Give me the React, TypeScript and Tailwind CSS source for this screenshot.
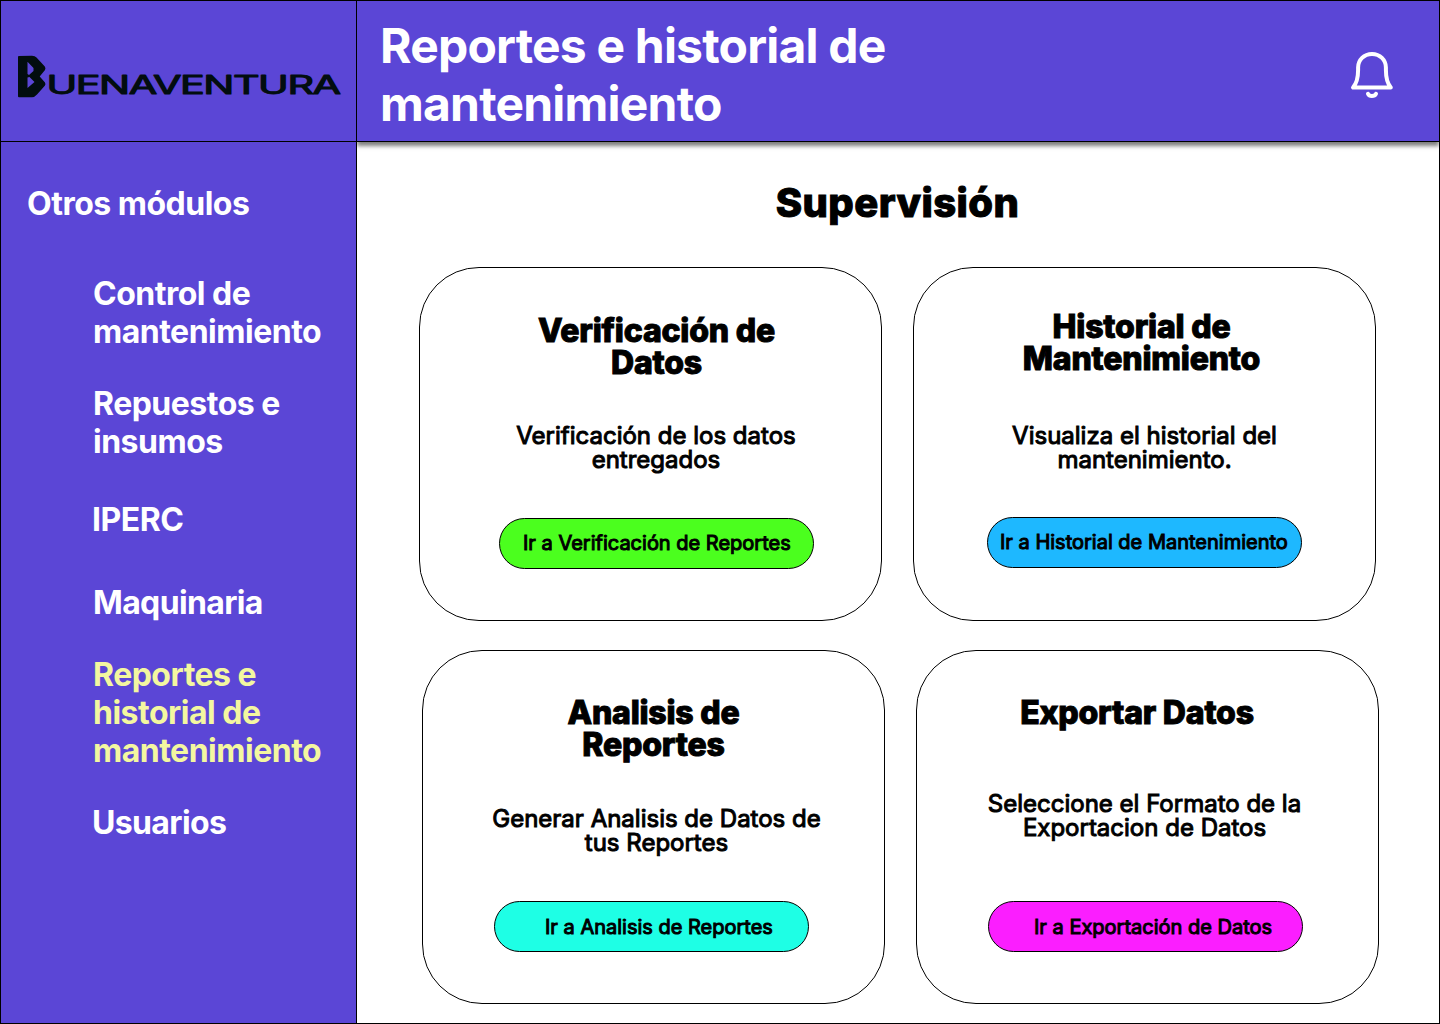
type CardData = {
  title: string[];
  text: string[];
  action: string;
  titleClass: string;
  textClass: string;
  buttonClass: string;
};

const rows: { className: string; cards: CardData[] }[] = [
  {
    className: "mt-[42px] ml-[62px]",
    cards: [
      {
        title: ["Verificación de", "Datos"],
        text: ["Verificación de los datos", "entregados"],
        action: "Ir a Verificación de Reportes",
        titleClass: "mt-[47px] pl-[12px] h-[109px]",
        textClass: "pl-[11px] h-[94px]",
        buttonClass: "ml-[79px] pl-[23px] pb-[1px] bg-[#4bff1e]",
      },
      {
        title: ["Historial de", "Mantenimiento"],
        text: ["Visualiza el historial del", "mantenimiento."],
        action: "Ir a Historial de Mantenimiento",
        titleClass: "mt-[43px] pr-[6px] h-[113px]",
        textClass: "h-[93px]",
        buttonClass: "ml-[73px] pl-[12px] pb-[1px] bg-[#1eb8ff]",
      },
    ],
  },
  {
    className: "mt-[29px] ml-[65px]",
    cards: [
      {
        title: ["Analisis de", "Reportes"],
        text: ["Generar Analisis de Datos de", "tus Reportes"],
        action: "Ir a Analisis de Reportes",
        titleClass: "mt-[46px] h-[110px]",
        textClass: "pl-[6px] h-[94px]",
        buttonClass: "ml-[71px] pl-[50px] bg-[#1effe5]",
      },
      {
        title: ["Exportar Datos"],
        text: ["Seleccione el Formato de la", "Exportacion de Datos"],
        action: "Ir a Exportación de Datos",
        titleClass: "mt-[46px] pr-[21px] h-[95px]",
        textClass: "pr-[6px] h-[109px]",
        buttonClass: "ml-[71px] pl-[45px] bg-[#fb1eff]",
      },
    ],
  },
];

const modules = [
  { lines: ["Control de", "mantenimiento"], className: "mt-[52px]" },
  { lines: ["Repuestos e", "insumos"], className: "mt-[34px]" },
  { lines: ["IPERC"], className: "mt-[40px] -ml-px" },
  { lines: ["Maquinaria"], className: "mt-[45px] tracking-[-0.02em]" },
  {
    lines: ["Reportes e", "historial de", "mantenimiento"],
    className: "mt-[34px] text-[#f3f7a0]",
  },
  { lines: ["Usuarios"], className: "mt-[34px] -ml-px tracking-[-0.02em]" },
];

function Lines({ lines }: { lines: string[] }) {
  return (
    <>
      {lines.map((line) => (
        <span key={line} className="block whitespace-nowrap">
          {line}
        </span>
      ))}
    </>
  );
}

function Logo() {
  return (
    <svg width="328" height="48" viewBox="0 0 328 48" className="mt-[50px] ml-[14px] block" fill="#020d0f">
      <path
        fillRule="evenodd"
        d="M3 5.8Q3 5 4 5L17 4.7Q20 5 21.5 6.4L29.8 15.5Q31 17.3 30 19L24.7 25.5L30 31.5Q31 33.2 29.8 34.8L22 43.5Q19.5 46.3 17 46.3H4Q3 46.3 3 45.3ZM12.5 10.7V23L14 24L18.5 20V17ZM12.5 26.5V37L19.5 31L14.5 26Z"
      />
      <text
        x="31.5"
        y="42.6"
        fontFamily="Inter, sans-serif"
        fontSize="25"
        fontWeight="400"
        letterSpacing="-0.9"
        stroke="#020d0f"
        strokeWidth="1"
        strokeLinejoin="round"
        textLength="293"
        lengthAdjust="spacingAndGlyphs"
      >
        UENAVENTURA
      </text>
    </svg>
  );
}

function Bell() {
  return (
    <svg
      width="50"
      height="54"
      viewBox="0 0 50 54"
      className="mt-[47px] mr-[42px] block shrink-0"
      fill="none"
      stroke="#fff"
      strokeWidth="4"
      strokeLinecap="round"
      strokeLinejoin="round"
    >
      <path d="M6 39.5H43.8C40 35 38.9 29 38.9 22V19.5C38.9 12 33 6 25 6S11.1 12 11.1 19.5V22C11.1 29 10 35 6 39.5Z" />
      <path d="M21 45.8C21.8 47.4 23 48 24.8 48S28.2 47.4 29 45.8" />
    </svg>
  );
}

function Card({ card }: { card: CardData }) {
  return (
    <article className="flex h-[354px] w-[463px] flex-col rounded-[60px] border border-black text-center text-black">
      <h3
        className={`shrink-0 text-[32px] leading-[32px] font-extrabold tracking-[-0.2px] [-webkit-text-stroke:1px_#000] ${card.titleClass}`}
      >
        <Lines lines={card.title} />
      </h3>
      <p
        className={`shrink-0 text-[24px] leading-[24px] [-webkit-text-stroke:1px_#000] ${card.textClass}`}
      >
        <Lines lines={card.text} />
      </p>
      <button
        className={`flex h-[51px] w-[315px] shrink-0 items-center rounded-full border border-black text-left text-[20px] leading-[20px] whitespace-nowrap [-webkit-text-stroke:1px_#000] ${card.buttonClass}`}
      >
        {card.action}
      </button>
    </article>
  );
}

export default function App() {
  return (
    <div className="flex h-[1024px] w-[1440px] overflow-hidden border border-black bg-white font-['Inter',sans-serif]">
      <aside className="relative z-10 flex w-[356px] shrink-0 flex-col border-r border-black bg-[#5b46d6] text-white">
        <div className="h-[141px] shrink-0 border-b border-black">
          <Logo />
        </div>
        <nav className="text-[32px] leading-[38px] font-bold tracking-[-0.5px]">
          <h2 className="mt-[43px] ml-[26px]">Otros módulos</h2>
          <ul className="ml-[92px]">
            {modules.map((item) => (
              <li key={item.lines[0]} className={item.className}>
                <Lines lines={item.lines} />
              </li>
            ))}
          </ul>
        </nav>
      </aside>
      <div className="flex flex-1 flex-col">
        <header className="flex h-[141px] shrink-0 justify-between border-b border-black bg-[#5b46d6] shadow-[0_4px_4px_rgba(0,0,0,0.5)]">
          <h1 className="mt-[16px] ml-[23px] text-[48px] leading-[58px] font-bold tracking-[-0.8px] text-white">
            <Lines lines={["Reportes e historial de", "mantenimiento"]} />
          </h1>
          <Bell />
        </header>
        <main>
          <h2 className="mt-[39px] ml-[-1px] h-[44px] text-center text-[40px] leading-[44px] font-extrabold tracking-[0.4px] text-black [-webkit-text-stroke:1px_#000]">
            Supervisión
          </h2>
          {rows.map((row) => (
            <section key={row.className} className={`flex gap-[31px] ${row.className}`}>
              {row.cards.map((card) => (
                <Card key={card.action} card={card} />
              ))}
            </section>
          ))}
        </main>
      </div>
    </div>
  );
}
